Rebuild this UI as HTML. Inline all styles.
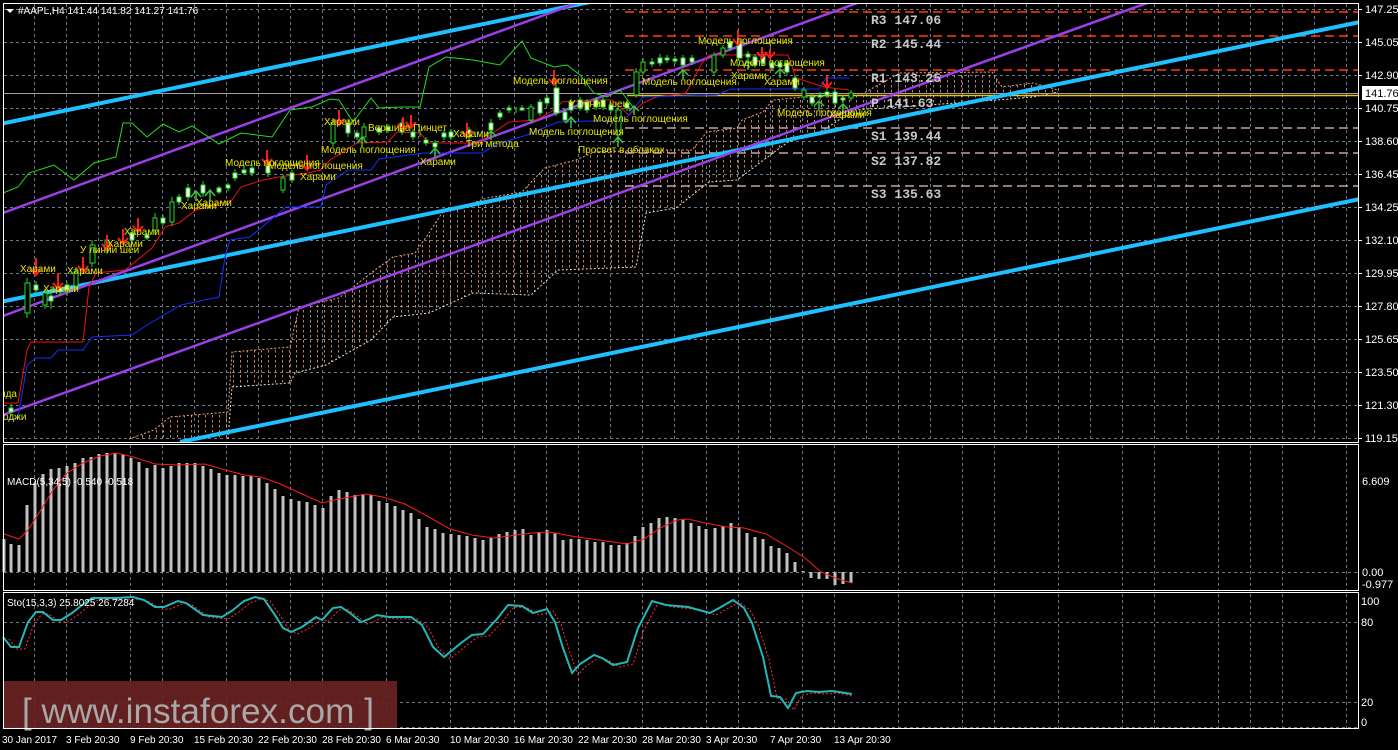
<!DOCTYPE html>
<html><head><meta charset="utf-8"><style>
html,body{margin:0;padding:0;background:#000;}
svg{display:block;}
.ax{font-family:"Liberation Sans",sans-serif;font-size:11px;fill:#fff;}
.lb{font-family:"Liberation Sans","DejaVu Sans",sans-serif;font-size:10px;fill:#e6e600;}
.pv{font-family:"Liberation Mono",monospace;font-size:13px;fill:#c8c8c8;font-weight:bold;}
</style></head><body>
<svg width="1398" height="750" viewBox="0 0 1398 750" xmlns="http://www.w3.org/2000/svg">
<defs>
<pattern id="cl" width="7" height="5" patternUnits="userSpaceOnUse">
<path d="M2.5 0 V2.5" stroke="#e89868" stroke-width="1"/>
</pattern>
<clipPath id="mainclip"><rect x="4" y="4" width="1354" height="438"/></clipPath>
<clipPath id="cloudclip"><path d="M129 439 L154 430 L170 417 L228 412 L232 352 L290 347 L299 307 L339 298 L371 273 L393 257 L415 253 L429 233 L442 213 L473 203 L487 198 L522 192 L536 177 L545 168 L576 160 L594 152 L651 150 L692 150 L707 132 L737 128 L742 120 L763 112 L773 100 L804 97 L860 95 L900 73 L992 72 L1002 87 L1033 83 L1058 90 L1058 92 L1033 97 L997 100 L900 107 L854 110 L819 133 L788 142 L773 153 L737 180 L709 182 L676 208 L646 213 L636 267 L558 270 L531 295 L473 293 L429 313 L393 317 L371 340 L326 365 L295 373 L290 383 L232 387 L228 439 Z"/></clipPath>
</defs>
<rect width="1398" height="750" fill="#000"/>

<!-- grid -->
<g stroke="#6a7a8a" stroke-width="1" stroke-dasharray="3,3" fill="none">
<path d="M4 9.5H1358M4 42.5H1358M4 75.5H1358M4 108.5H1358M4 141.5H1358M4 174.5H1358M4 207.5H1358M4 240.5H1358M4 273.5H1358M4 306.5H1358M4 339.5H1358M4 372.5H1358M4 405.5H1358M4 438.5H1358"/>
<path d="M4 572.5H1358M4 622.5H1358M4 702.5H1358M4 727.5H1358"/>
<path d="M34.5 4V442M66.5 4V442M98.5 4V442M130.5 4V442M162.5 4V442M194.5 4V442M226.5 4V442M258.5 4V442M290.5 4V442M322.5 4V442M354.5 4V442M386.5 4V442M418.5 4V442M450.5 4V442M482.5 4V442M514.5 4V442M546.5 4V442M578.5 4V442M610.5 4V442M642.5 4V442M674.5 4V442M706.5 4V442M738.5 4V442M770.5 4V442M802.5 4V442M834.5 4V442M866.5 4V442M898.5 4V442M930.5 4V442M962.5 4V442M994.5 4V442M1026.5 4V442M1058.5 4V442M1090.5 4V442M1122.5 4V442M1154.5 4V442M1186.5 4V442M1218.5 4V442M1250.5 4V442M1282.5 4V442M1314.5 4V442M1346.5 4V442"/>
<path d="M34.5 445V590M66.5 445V590M130.5 445V590M162.5 445V590M226.5 445V590M290.5 445V590M322.5 445V590M386.5 445V590M450.5 445V590M514.5 445V590M546.5 445V590M578.5 445V590M642.5 445V590M706.5 445V590M738.5 445V590M802.5 445V590M834.5 445V590M898.5 445V590M962.5 445V590M994.5 445V590M1058.5 445V590M1122.5 445V590M1154.5 445V590M1218.5 445V590M1250.5 445V590M1282.5 445V590M1346.5 445V590"/>
<path d="M34.5 594V728M66.5 594V728M130.5 594V728M162.5 594V728M226.5 594V728M290.5 594V728M322.5 594V728M386.5 594V728M450.5 594V728M514.5 594V728M546.5 594V728M578.5 594V728M642.5 594V728M706.5 594V728M738.5 594V728M802.5 594V728M834.5 594V728M898.5 594V728M962.5 594V728M994.5 594V728M1058.5 594V728M1122.5 594V728M1154.5 594V728M1218.5 594V728M1250.5 594V728M1282.5 594V728M1346.5 594V728"/>
</g>

<g clip-path="url(#mainclip)">
<!-- cloud -->
<rect x="120" y="60" width="950" height="390" fill="url(#cl)" clip-path="url(#cloudclip)" opacity="0.85"/>
<path d="M129 439 L154 430 L170 417 L228 412 L232 352 L290 347 L299 307 L339 298 L371 273 L393 257 L415 253 L429 233 L442 213 L473 203 L487 198 L522 192 L536 177 L545 168 L576 160 L594 152 L651 150 L692 150 L707 132 L737 128 L742 120 L763 112 L773 100 L804 97 L860 95 L900 73 L992 72 L1002 87 L1033 83 L1058 90" fill="none" stroke="#f0a878" stroke-dasharray="2,2"/>
<path d="M228 439 L232 387 L290 383 L295 373 L326 365 L371 340 L393 317 L429 313 L473 293 L531 295 L558 270 L636 267 L646 213 L676 208 L709 182 L737 180 L773 153 L788 142 L819 133 L854 110 L900 107 L997 100 L1033 97 L1058 92" fill="none" stroke="#e8e0d0" stroke-dasharray="2,2"/>

<!-- price line -->
<path d="M4 93.5H1358" stroke="#a0a0a0"/>
<!-- pivots -->
<g stroke-width="1.5" stroke-dasharray="9,5" fill="none">
<path d="M625 12H1358M625 36H1358M625 70H1358" stroke="#ff3a10"/>
<path d="M625 128H1358M625 153H1358M625 186H1358" stroke="#c8a0a0"/>
</g>
<path d="M627 95.5H1358" stroke="#e8c020" stroke-width="1.5"/>

<!-- cyan lines -->
<g stroke="#1ec0ff" stroke-width="4" fill="none">
<path d="M0 124 L590 2"/>
<path d="M0 302 L1360 22"/>
<path d="M180 442 L1360 199"/>
</g>
<!-- purple -->
<g stroke="#9a40e8" stroke-width="2.5" fill="none">
<path d="M0 214 L580 2"/>
<path d="M0 317 L860 2"/>
<path d="M0 416 L1150 2"/>
</g>

<!-- chikou green -->
<polyline fill="none" stroke="#22dd22" stroke-width="1" points="3,193 18,187 29,173 54,165 74,180 94,163 116,157 123,123 132,123 147,137 163,124 179,132 192,126 219,144 241,133 272,137 290,110 312,107 330,99 339,100 353,122 371,98 379,108 402,107 420,107 429,67 446,57 473,60 500,65 522,41 531,58 554,67 567,65 580,75 594,93 607,97 620,90 633,107"/>
<!-- tenkan red -->
<polyline fill="none" stroke="#ee1010" stroke-width="1" points="3,403 18,403 27,350 31,342 83,342 89,287 96,273 125,270 152,248 165,227 179,223 196,210 232,200 241,187 263,180 279,177 308,173 321,170 330,160 357,143 388,142 397,132 420,133 429,143 478,143 500,128 509,122 536,120 554,110 562,102 594,100 612,100 629,115 643,103 656,97 686,93 702,63 709,55 788,55 796,78 824,87 849,90"/>
<!-- kijun blue -->
<polyline fill="none" stroke="#1030ff" stroke-width="1" points="4,420 18,418 27,365 36,358 51,358 58,350 83,350 92,337 132,335 147,325 181,305 219,297 225,257 230,240 250,237 286,207 321,207 326,185 348,170 371,170 379,159 424,153 482,153 500,143 527,135 558,122 625,120 643,97 717,95 730,89 819,89 826,78 849,78"/>

<!-- candles -->
<g stroke="#22dd22" stroke-width="1" fill="#fff">
<path fill="none" d="M11 404V416M27 278V318M36 281V293M45 289V309M51 291V309M60 286V296M67 282V296M76 267V290M92 240V267M107 236V254M132 228V244M147 233V240M155 213V234M163 215V226M172 197V226M179 194V205M188 184V201M203 181V197M219 186V194M228 183V191M235 169V181M244 168V175M252 164V176M268 159V177M283 174V193M292 170V183M333 118V147M348 119V137M357 130V140M364 123V140M379 125V135M388 124V133M402 119V135M413 129V140M420 130V137M426 137V146M435 140V150M444 130V140M451 129V140M469 127V140M491 119V133M500 110V120M509 105V113M516 107V113M522 105V111M531 104V123M540 99V116M547 95V106M556 84V116M565 109V123M571 99V113M580 97V111M587 99V113M596 97V110M603 97V110M611 102V113M618 106V138M627 100V111M636 68V98M643 58V75M652 58V67M660 54V66M667 55V63M675 56V64M683 55V68M692 55V65M714 52V75M723 45V58M730 39V51M739 38V61M748 51V60M755 54V68M763 52V66M772 60V71M780 60V70M787 60V75M795 75V91M804 87V100M812 94V106M820 92V100M827 89V98M835 89V106M843 95V103M851 90V101"/>
<rect x="9" y="408" width="4" height="4"/>
<rect x="25" y="283" width="5" height="30" fill="#000"/>
<rect x="34" y="285" width="4" height="5"/>
<rect x="43" y="293" width="4" height="12" fill="#000"/>
<rect x="49" y="296" width="4" height="5"/>
<rect x="58" y="288" width="4" height="4"/>
<rect x="65" y="285" width="4" height="5"/>
<rect x="74" y="272" width="4" height="14" fill="#000"/>
<rect x="90" y="245" width="5" height="18" fill="#000"/>
<rect x="105" y="240" width="4" height="10" fill="#000"/>
<rect x="130" y="233" width="4" height="7"/>
<rect x="145" y="235" width="4" height="3"/>
<rect x="153" y="218" width="4" height="12" fill="#000"/>
<rect x="161" y="218" width="4" height="5"/>
<rect x="170" y="202" width="4" height="20" fill="#000"/>
<rect x="177" y="197" width="4" height="5"/>
<rect x="186" y="188" width="4" height="9"/>
<rect x="201" y="185" width="4" height="8"/>
<rect x="217" y="188" width="4" height="4"/>
<rect x="226" y="185" width="4" height="3"/>
<rect x="233" y="173" width="4" height="5"/>
<rect x="242" y="170" width="4" height="3"/>
<rect x="250" y="168" width="4" height="5"/>
<rect x="266" y="163" width="4" height="10"/>
<rect x="281" y="178" width="4" height="12" fill="#000"/>
<rect x="290" y="173" width="4" height="7"/>
<rect x="331" y="123" width="4" height="20" fill="#000"/>
<rect x="346" y="123" width="4" height="10"/>
<rect x="355" y="133" width="4" height="4"/>
<rect x="362" y="127" width="4" height="10" fill="#000"/>
<rect x="377" y="128" width="4" height="4"/>
<rect x="386" y="127" width="4" height="3"/>
<rect x="400" y="123" width="4" height="9"/>
<rect x="411" y="132" width="4" height="5"/>
<rect x="424" y="140" width="4" height="3"/>
<rect x="433" y="143" width="4" height="4"/>
<rect x="442" y="133" width="4" height="4"/>
<rect x="449" y="132" width="4" height="5"/>
<rect x="467" y="130" width="4" height="7"/>
<rect x="489" y="123" width="4" height="7"/>
<rect x="498" y="113" width="4" height="4"/>
<rect x="507" y="108" width="4" height="2"/>
<rect x="520" y="108" width="4" height="2"/>
<rect x="529" y="107" width="4" height="13" fill="#000"/>
<rect x="538" y="102" width="4" height="11"/>
<rect x="545" y="98" width="4" height="5"/>
<rect x="554" y="88" width="5" height="25"/>
<rect x="563" y="112" width="4" height="8"/>
<rect x="569" y="102" width="4" height="8"/>
<rect x="578" y="100" width="4" height="8"/>
<rect x="585" y="102" width="4" height="8"/>
<rect x="594" y="100" width="4" height="7"/>
<rect x="601" y="100" width="4" height="7"/>
<rect x="609" y="105" width="4" height="5"/>
<rect x="616" y="110" width="5" height="25" fill="#000"/>
<rect x="625" y="103" width="4" height="5"/>
<rect x="634" y="72" width="5" height="23" fill="#000"/>
<rect x="641" y="62" width="4" height="10" fill="#000"/>
<rect x="650" y="62" width="4" height="2"/>
<rect x="658" y="58" width="4" height="5"/>
<rect x="665" y="58" width="4" height="2"/>
<rect x="673" y="59" width="4" height="2"/>
<rect x="681" y="58" width="4" height="7"/>
<rect x="690" y="58" width="4" height="4"/>
<rect x="712" y="55" width="4" height="17" fill="#000"/>
<rect x="721" y="48" width="4" height="7" fill="#000"/>
<rect x="728" y="42" width="4" height="6"/>
<rect x="737" y="42" width="5" height="16"/>
<rect x="746" y="54" width="4" height="3"/>
<rect x="753" y="57" width="4" height="8"/>
<rect x="761" y="55" width="4" height="8"/>
<rect x="770" y="63" width="4" height="5"/>
<rect x="778" y="63" width="4" height="4"/>
<rect x="785" y="63" width="4" height="9"/>
<rect x="793" y="78" width="4" height="10"/>
<rect x="802" y="90" width="4" height="7" fill="#000"/>
<rect x="810" y="97" width="4" height="6"/>
<rect x="818" y="95" width="4" height="2"/>
<rect x="825" y="92" width="4" height="3"/>
<rect x="833" y="92" width="4" height="11"/>
<rect x="841" y="98" width="4" height="2"/>
<rect x="849" y="93" width="4" height="5" fill="#000"/>
</g>

<!-- red down arrows -->
<g stroke="#ff1a1a" stroke-width="2" fill="none">
<path d="M36 258V275M31 269L36 275L41 269"/>
<path d="M58 273V289M53 283L58 289L63 283"/>
<path d="M83 257V272M78 266L83 272L88 266"/>
<path d="M107 235V250M102 244L107 250L112 244"/>
<path d="M123 229V244M118 238L123 244L128 238"/>
<path d="M138 218V232M133 226L138 232L143 226"/>
<path d="M267 150V165M262 159L267 165L272 159"/>
<path d="M307 155V170M302 164L307 170L312 164"/>
<path d="M339 110V125M334 119L339 125L344 119"/>
<path d="M403 117V130M398 124L403 130L408 124"/>
<path d="M411 115V128M406 122L411 128L416 122"/>
<path d="M467 123V137M462 131L467 137L472 131"/>
<path d="M554 70V85M549 79L554 85L559 79"/>
<path d="M738 30V45M733 39L738 45L743 39"/>
<path d="M762 47V58M757 52L762 58L767 52"/>
<path d="M770 49V58M765 52L770 58L775 52"/>
<path d="M827 76V88M822 82L827 88L832 82"/>
</g>
<!-- green up arrows -->
<g stroke="#40c040" stroke-width="1.5" fill="none">
<path d="M196 201V191M191 197L196 191L201 197"/>
<path d="M210 201V190M205 196L210 190L215 196"/>
<path d="M362 147V137M357 143L362 137L367 143"/>
<path d="M435 158V148M430 154L435 148L440 154"/>
<path d="M491 140V131M486 136L491 131L496 136"/>
<path d="M571 128V117M566 123L571 117L576 123"/>
<path d="M618 147V137M613 143L618 137L623 143"/>
<path d="M634 115V106M629 111L634 106L639 111"/>
<path d="M683 79V70M678 75L683 70L688 75"/>
<path d="M748 70V61M743 66L748 61L753 66"/>
<path d="M780 78V69M775 74L780 69L785 74"/>
<path d="M819 110V101M814 106L819 101L824 106"/>
<path d="M843 112V104M838 109L843 104L848 109"/>
</g>

<!-- labels -->
<g class="lb">
<text x="20" y="272">Харами</text>
<text x="43" y="292">Харами</text>
<text x="67" y="274">Харами</text>
<text x="80" y="253">У линии шеи</text>
<text x="107" y="247">Харами</text>
<text x="124" y="235">Харами</text>
<text x="181" y="209">Харами</text>
<text x="196" y="206">Харами</text>
<text x="225" y="166">Модель поглощения</text>
<text x="268" y="169">Модель поглощения</text>
<text x="300" y="180">Харами</text>
<text x="324" y="125">Харами</text>
<text x="321" y="153">Модель поглощения</text>
<text x="368" y="131">Вершина Пинцет</text>
<text x="420" y="165">Харами</text>
<text x="453" y="137">Харами</text>
<text x="466" y="147">Три метода</text>
<text x="513" y="84">Модель поглощения</text>
<text x="569" y="107">У линии шеи</text>
<text x="529" y="135">Модель поглощения</text>
<text x="593" y="122">Модель поглощения</text>
<text x="578" y="153">Просвет в облаках</text>
<text x="642" y="85">Модель поглощения</text>
<text x="698" y="44">Модель поглощения</text>
<text x="730" y="66">Модель поглощения</text>
<text x="731" y="79">Харами</text>
<text x="764" y="85">Харами</text>
<text x="777" y="116">Модель поглощения</text>
<text x="829" y="118">Харами</text>
<text x="0" y="397">ида</text>
<text x="3" y="420">оджи</text>
</g>
</g>

<!-- pivot labels -->
<g class="pv">
<text x="871" y="24">R3 147.06</text>
<text x="871" y="48">R2 145.44</text>
<text x="871" y="82">R1 143.25</text>
<text x="871" y="107">P 141.63</text>
<text x="871" y="140">S1 139.44</text>
<text x="871" y="165">S2 137.82</text>
<text x="871" y="198">S3 135.63</text>
</g>

<!-- MACD bars -->
<path stroke="#c0c0c0" stroke-width="3" fill="none" d="M4 572V539M11 572V544M19 572V545M27 572V505M35 572V483M43 572V474M51 572V469M59 572V468M67 572V466M75 572V463M83 572V458M91 572V457M99 572V454M107 572V453M115 572V453M123 572V454M131 572V458M139 572V462M147 572V468M155 572V465M163 572V468M171 572V466M179 572V463M187 572V463M195 572V463M203 572V466M211 572V469M219 572V473M227 572V475M235 572V475M243 572V476M251 572V476M259 572V478M267 572V483M275 572V489M283 572V496M291 572V499M299 572V501M307 572V502M315 572V505M323 572V508M331 572V496M339 572V490M347 572V492M355 572V495M363 572V494M371 572V495M379 572V501M387 572V503M395 572V506M403 572V510M411 572V513M419 572V519M427 572V527M435 572V529M443 572V533M451 572V534M459 572V535M467 572V536M475 572V538M483 572V540M491 572V538M499 572V534M507 572V532M515 572V530M523 572V529M531 572V535M539 572V532M547 572V530M555 572V533M563 572V540M571 572V539M579 572V539M587 572V540M595 572V542M603 572V542M611 572V545M619 572V545M627 572V543M635 572V536M643 572V527M651 572V523M659 572V518M667 572V517M675 572V518M683 572V519M691 572V523M699 572V526M706 572V529M715 572V528M723 572V526M731 572V523M739 572V527M747 572V533M755 572V537M763 572V539M771 572V546M779 572V548M787 572V553M795 572V562M803 572V571M811 572V578M819 572V579M827 572V579M835 572V585M843 572V584M851 572V583"/>
<polyline fill="none" stroke="#ff1a1a" stroke-width="1" points="4,534 19,539 28,530 39,513 53,490 67,473 83,463 100,456 117,453 133,457 155,464 178,465 205,464 222,469 244,475 261,477 278,483 300,493 322,503 339,499 366,494 383,497 405,504 427,516 450,529 472,535 494,538 516,535 533,533 549,532 577,537 599,540 627,544 644,539 660,528 677,520 688,519 705,523 727,527 744,528 766,534 788,547 805,558 821,572 838,579 852,583"/>
<text x="7" y="485" class="ax" style="font-size:10px">MACD(5,34,5) -0.540 -0.518</text>

<!-- Stoch -->
<polyline fill="none" stroke="#ff3030" stroke-width="1" stroke-dasharray="2,2" transform="translate(6,2)" points="3,637 11,647 19,647 28,622 36,612 43,612 53,620 61,620 72,613 82,605 92,598 100,598 117,598 133,597 144,600 155,607 164,607 178,601 186,603 203,615 222,617 233,610 244,601 255,597 264,599 275,615 283,628 291,632 302,627 316,617 322,620 333,608 341,607 350,613 361,622 369,619 377,615 389,617 411,617 422,625 433,647 444,657 461,643 472,635 483,634 497,619 508,605 522,606 533,613 547,609 555,622 563,648 572,673 580,664 594,655 602,658 613,665 627,662 638,628 652,601 666,605 688,607 710,613 721,607 733,600 744,608 752,623 763,657 771,696 780,697 788,708 796,693 807,691 819,692 832,691 846,694"/>
<polyline fill="none" stroke="#20b8b8" stroke-width="2" points="3,637 11,647 19,647 28,622 36,612 43,612 53,620 61,620 72,613 82,605 92,598 100,598 117,598 133,597 144,600 155,607 164,607 178,601 186,603 203,615 222,617 233,610 244,601 255,597 264,599 275,615 283,628 291,632 302,627 316,617 322,620 333,608 341,607 350,613 361,622 369,619 377,615 389,617 411,617 422,625 433,647 444,657 461,643 472,635 483,634 497,619 508,605 522,606 533,613 547,609 555,622 563,648 572,673 580,664 594,655 602,658 613,665 627,662 638,628 652,601 666,605 688,607 710,613 721,607 733,600 744,608 752,623 763,657 771,696 780,697 788,708 796,693 807,691 819,692 832,691 852,694"/>
<text x="7" y="606" class="ax" style="font-size:10px">Sto(15,3,3) 25.8025 26.7284</text>

<!-- watermark -->
<rect x="3" y="681" width="394" height="47" fill="#6a2222" opacity="0.92"/>
<text x="22" y="723" style="font-family:'Liberation Sans',sans-serif;font-size:35px;fill:#a8a8a8;" textLength="352" lengthAdjust="spacingAndGlyphs">[ www.instaforex.com ]</text>

<!-- frames -->
<g fill="none" stroke="#fff" stroke-width="1">
<rect x="3.5" y="3.5" width="1355" height="439"/>
<rect x="3.5" y="444.5" width="1355" height="146"/>
<rect x="3.5" y="592.5" width="1355" height="136"/>
</g>

<!-- price axis -->
<g stroke="#fff"><path d="M1359 9.5h3M1359 42.5h3M1359 75.5h3M1359 108.5h3M1359 141.5h3M1359 174.5h3M1359 207.5h3M1359 240.5h3M1359 273.5h3M1359 306.5h3M1359 339.5h3M1359 372.5h3M1359 405.5h3M1359 438.5h3"/></g>
<g class="ax">
<text x="1365" y="13">147.25</text>
<text x="1365" y="46">145.05</text>
<text x="1365" y="79">142.90</text>
<text x="1365" y="112">140.75</text>
<text x="1365" y="145">138.60</text>
<text x="1365" y="178">136.45</text>
<text x="1365" y="211">134.25</text>
<text x="1365" y="244">132.10</text>
<text x="1365" y="277">129.95</text>
<text x="1365" y="310">127.80</text>
<text x="1365" y="343">125.65</text>
<text x="1365" y="376">123.50</text>
<text x="1365" y="409">121.30</text>
<text x="1365" y="442">119.15</text>
<text x="1362" y="485">6.609</text>
<text x="1362" y="576">0.00</text>
<text x="1362" y="588">-0.977</text>
<text x="1361" y="605">100</text>
<text x="1361" y="626">80</text>
<text x="1361" y="706">20</text>
<text x="1361" y="726">0</text>
</g>
<rect x="1362" y="86" width="36" height="14" fill="#fff"/>
<text x="1365" y="97" class="ax" style="fill:#000">141.76</text>

<!-- title -->
<path d="M6 9 L14 9 L10 13 Z" fill="#fff"/>
<text x="18" y="14" class="ax" style="font-size:10px">#AAPL,H4  141.44 141.82 141.27 141.76</text>

<!-- dates -->
<g class="ax" style="font-size:10px">
<text x="2" y="743">30 Jan 2017</text>
<text x="66" y="743">3 Feb 20:30</text>
<text x="130" y="743">9 Feb 20:30</text>
<text x="194" y="743">15 Feb 20:30</text>
<text x="258" y="743">22 Feb 20:30</text>
<text x="322" y="743">28 Feb 20:30</text>
<text x="386" y="743">6 Mar 20:30</text>
<text x="450" y="743">10 Mar 20:30</text>
<text x="514" y="743">16 Mar 20:30</text>
<text x="578" y="743">22 Mar 20:30</text>
<text x="642" y="743">28 Mar 20:30</text>
<text x="706" y="743">3 Apr 20:30</text>
<text x="770" y="743">7 Apr 20:30</text>
<text x="834" y="743">13 Apr 20:30</text>
</g>
</svg>
</body></html>
